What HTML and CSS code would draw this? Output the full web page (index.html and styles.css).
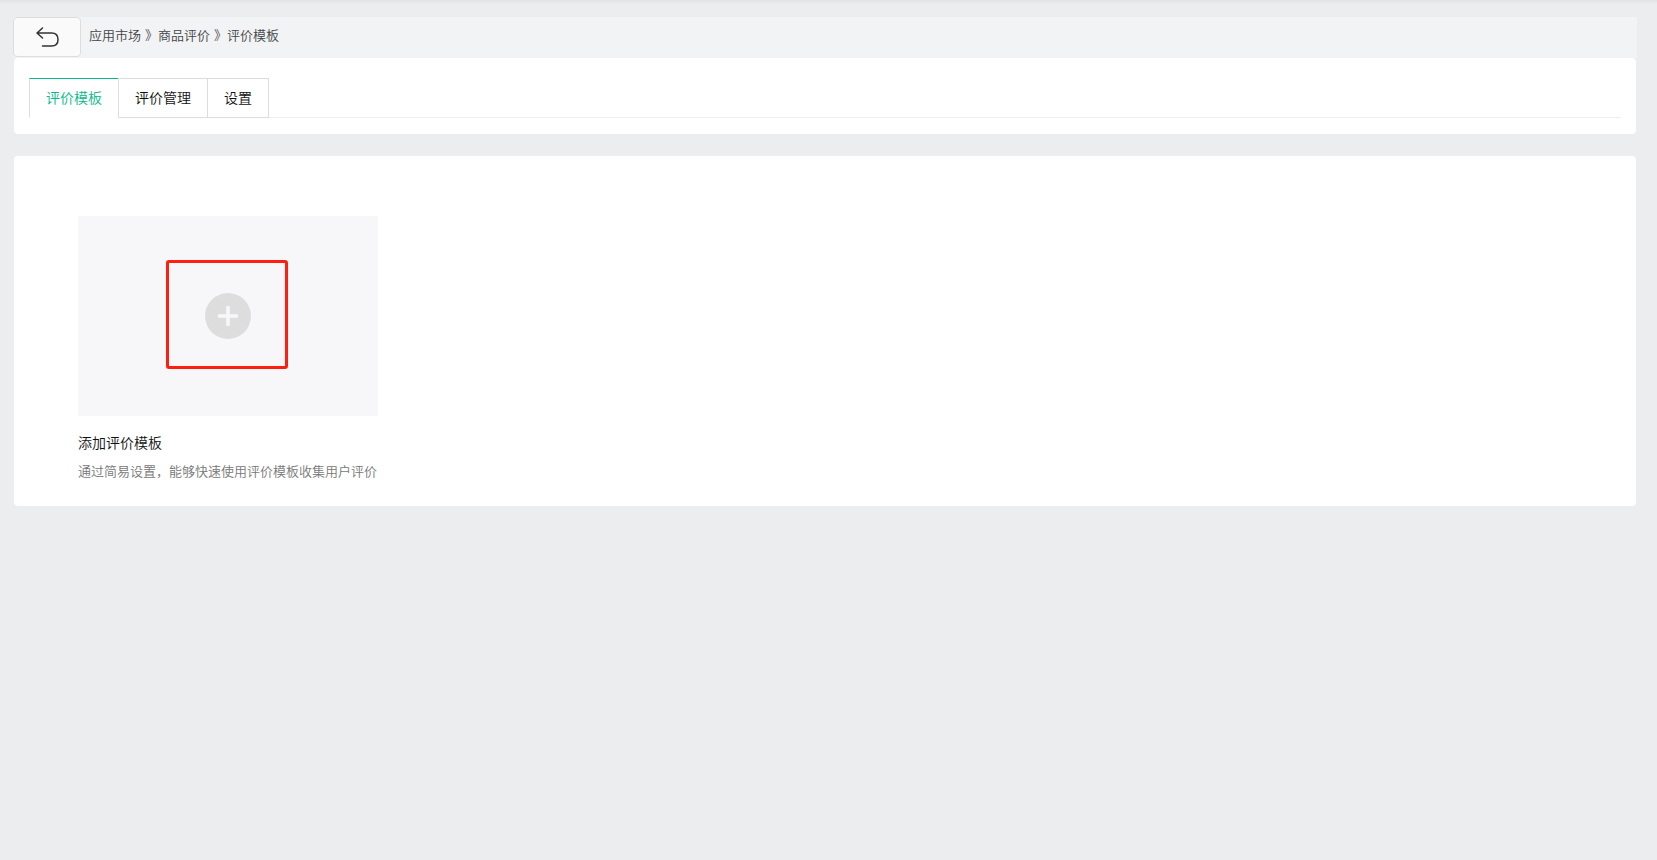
FILE: index.html
```html
<!DOCTYPE html>
<html lang="zh-CN">
<head>
<meta charset="utf-8">
<title>评价模板</title>
<link rel="stylesheet" href="styles.css">
</head>
<body>
<main class="page">
  <header class="topbar">
    <button class="back" type="button" aria-label="返回">
      <svg width="24" height="22" viewBox="0 0 24 22" fill="none" stroke="#333" stroke-width="1.5" stroke-linecap="round" stroke-linejoin="round">
        <path d="M7.500 2 2 7l5.500 5M2 7h14.500c4 0 6.500 2.500 6.500 6.500s-2.500 6.500-6.500 6.500H7.500"/>
      </svg>
    </button>
    <nav class="crumbs" aria-label="面包屑">
      <a href="#">应用市场</a>
      <span>》</span><a href="#">商品评价</a>
      <span>》</span><a href="#">评价模板</a>
    </nav>
  </header>
  <section class="panel tabs-panel">
    <nav class="tabs">
      <a class="tab tab-active" href="#">评价模板</a>
      <a class="tab" href="#">评价管理</a>
      <a class="tab tab-last" href="#">设置</a>
    </nav>
  </section>
  <section class="panel templates">
    <article class="card">
      <button class="add" type="button" aria-label="添加评价模板">
        <svg width="46" height="46" viewBox="0 0 46 46">
          <circle cx="23" cy="23" r="23" fill="#ddd"/>
          <path d="M13 23h20M23 13v20" stroke="#f7f7fa" stroke-width="3.500"/>
        </svg>
        <span class="highlight"></span>
      </button>
      <h2 class="card-title">添加评价模板</h2>
      <p class="card-text">通过简易设置，能够快速使用评价模板收集用户评价</p>
    </article>
  </section>
</main>
</body>
</html>
```
FILE: styles.css
```css
* {
  box-sizing: border-box;
}

body {
  margin: 0;
  min-height: 100vh;
  background: #ecedef linear-gradient(#e1e2e4, #ecedef) 0 0 / 100% 4px no-repeat;
  color: #111;
  font-family: "Noto Sans CJK SC", sans-serif;
  font-size: 14px;
  font-weight: 350;
}

a {
  color: inherit;
  text-decoration: none;
}

.page {
  padding: 17px 20px 20px 13px;
}

.topbar {
  display: flex;
  align-items: flex-start;
  height: 41px;
  background: #f1f3f5;
}

.back {
  display: flex;
  align-items: center;
  justify-content: center;
  width: 68px;
  height: 40px;
  padding: 0;
  border: 1px solid #ddd;
  border-radius: 4px;
  background: #fafafa;
}

.crumbs {
  display: flex;
  padding-left: 8px;
  color: #444;
  font-size: 13px;
  line-height: 36px;
}

.crumbs span {
  margin-left: 4px;
}

.panel {
  margin: 0 1px;
  border-radius: 4px;
  background: #fff;
}

.tabs-panel {
  padding: 20px 15px 16px;
}

.tabs {
  display: flex;
  box-shadow: inset 0 -1px #eee;
}

.tab {
  height: 40px;
  padding: 0 16px;
  border: 1px solid #ddd;
  border-right: 0;
  line-height: 36px;
}

.tab-last {
  border-right: 1px solid #ddd;
}

.tab-active {
  border-top-color: #07b98a;
  border-bottom-color: #fff;
  color: #07b98a;
}

.templates {
  margin-top: 22px;
  padding: 60px 64px 21px;
}

.card {
  width: 300px;
}

.add {
  position: relative;
  display: flex;
  align-items: center;
  justify-content: center;
  width: 100%;
  height: 200px;
  padding: 0;
  border: 0;
  background: #f7f7fa;
}

.highlight {
  position: absolute;
  top: 44px;
  left: 88px;
  width: 122px;
  height: 109px;
  border: 3px solid #ff1f10;
  border-radius: 3px;
}

.card-title {
  margin: 12px 0 0;
  font-size: 14px;
  font-weight: inherit;
  line-height: 29px;
}

.card-text {
  margin: 0;
  color: #777;
  font-size: 13px;
  line-height: 28px;
  white-space: nowrap;
}
```
